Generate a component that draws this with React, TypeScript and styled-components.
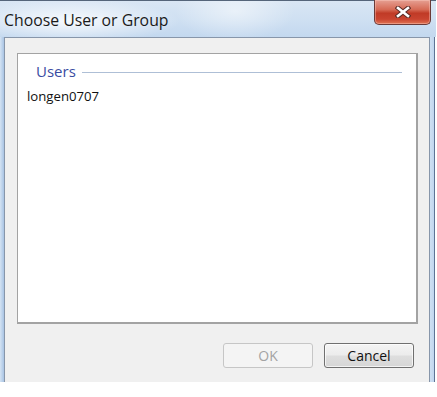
import React from 'react';
import styled, { createGlobalStyle } from 'styled-components';

const GlobalStyle = createGlobalStyle`
  html, body {
    margin: 0;
    padding: 0;
    background: #ffffff;
  }
  body {
    font-family: "Open Sans", "Noto Sans", "DejaVu Sans", sans-serif;
  }
`;

const Window = styled.div`
  width: 436px;
  height: 382px;
  display: flex;
  flex-direction: column;
  background: #c6daf0;
  border-top: 1px solid #55657a;
  box-sizing: border-box;
`;

const TitleBar = styled.div`
  height: 36px;
  display: flex;
  justify-content: space-between;
  align-items: flex-start;
  background:
    radial-gradient(ellipse 110px 22px at 70px 20px, rgba(255, 255, 255, 0.85), rgba(255, 255, 255, 0) 100%),
    radial-gradient(ellipse 60px 30px at 235px 10px, rgba(255, 255, 255, 0.5), rgba(255, 255, 255, 0) 100%),
    linear-gradient(to bottom, #d9e6f4 0%, #cfe0f2 50%, #c3d8ef 100%);
`;

const Title = styled.div`
  font-size: 15.8px;
  color: #1a1a1a;
  padding: 8px 0 0 4px;
`;

const CloseButton = styled.div`
  width: 57px;
  height: 25px;
  margin-right: 5px;
  margin-top: -1px;
  box-sizing: border-box;
  border: 1px solid #6a3a38;
  border-top: none;
  border-radius: 0 0 5px 5px;
  background: linear-gradient(to bottom, #e6a093 0%, #d66a55 40%, #c03a26 55%, #c94430 80%, #e07454 100%);
  box-shadow: inset 0 0 0 1px rgba(255, 210, 200, 0.4);
  display: flex;
  align-items: center;
  justify-content: center;
`;

const Body = styled.div`
  flex: 1;
  display: flex;
`;

const LeftFrame = styled.div`
  width: 4px;
  background: linear-gradient(to right, #d4e3f3, #a9c4e4);
`;

const RightFrame = styled.div`
  width: 6px;
  background: linear-gradient(to right, #cfe0f2 0%, #c0d5ee 70%, #5d7394 70%, #5d7394 85%, #ffffff 85%);
`;

const Client = styled.div`
  flex: 1;
  display: flex;
  flex-direction: column;
  background: #f0f0f0;
  border: 1px solid #8796aa;
  border-bottom: none;
  padding: 15px 11px 12px 12px;
`;

const ListPanel = styled.div`
  height: 271px;
  background: #ffffff;
  border: 1px solid #a3a3a3;
  border-right-width: 2px;
  border-bottom-width: 2px;
  box-sizing: border-box;
  padding: 7px 14px 0 9px;
`;

const GroupHeader = styled.div`
  display: flex;
  align-items: center;
  gap: 6px;
  padding-left: 9px;
`;

const GroupTitle = styled.span`
  font-size: 15px;
  color: #3a4ca2;
`;

const GroupLine = styled.div`
  flex: 1;
  height: 1px;
  margin-top: 2px;
  background: #aebfd6;
`;

const UserItem = styled.div`
  font-size: 13.2px;
  color: #111111;
  margin-top: 6px;
`;

const ButtonRow = styled.div`
  display: flex;
  justify-content: flex-end;
  gap: 11px;
  margin-top: 19px;
  padding-right: 4px;
`;

const Button = styled.button<{ $disabled?: boolean }>`
  width: 90px;
  height: 25px;
  border-radius: 3px;
  font-family: "Open Sans", "Noto Sans", sans-serif;
  font-size: 14px;
  padding: 0;
  border: 1px solid ${p => (p.$disabled ? '#c6c6c6' : '#707070')};
  color: ${p => (p.$disabled ? '#a3a3a3' : '#111111')};
  background: ${p =>
    p.$disabled
      ? '#f4f4f4'
      : 'linear-gradient(to bottom, #f4f4f4 0%, #ececec 48%, #dedede 52%, #d6d6d6 100%)'};
  box-shadow: inset 0 0 0 1px ${p => (p.$disabled ? '#f4f4f4' : 'rgba(255,255,255,0.7)')};
`;

function CloseIcon() {
  return (
    <svg width="16" height="12" viewBox="0 0 16 12">
      <g strokeLinecap="square">
        <path d="M3 2 L13 10 M13 2 L3 10" stroke="#5a2a25" strokeWidth="4.6" />
        <path d="M3 2 L13 10 M13 2 L3 10" stroke="#ffffff" strokeWidth="2.6" />
      </g>
    </svg>
  );
}

export default function App() {
  return (
    <>
      <GlobalStyle />
      <Window>
        <TitleBar>
          <Title>Choose User or Group</Title>
          <CloseButton>
            <CloseIcon />
          </CloseButton>
        </TitleBar>
        <Body>
          <LeftFrame />
          <Client>
            <ListPanel>
              <GroupHeader>
                <GroupTitle>Users</GroupTitle>
                <GroupLine />
              </GroupHeader>
              <UserItem>longen0707</UserItem>
            </ListPanel>
            <ButtonRow>
              <Button $disabled disabled>OK</Button>
              <Button>Cancel</Button>
            </ButtonRow>
          </Client>
          <RightFrame />
        </Body>
      </Window>
    </>
  );
}
